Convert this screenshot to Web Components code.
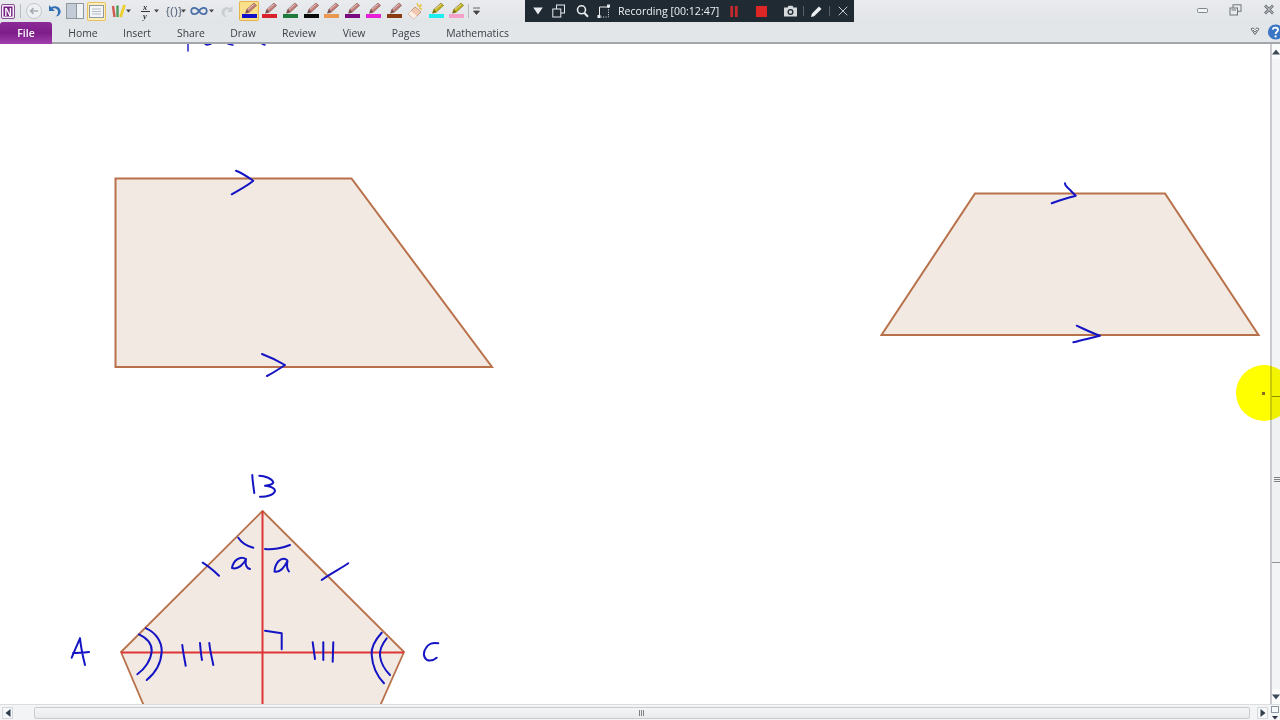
<!DOCTYPE html>
<html lang="en">
<head>
<meta charset="utf-8">
<title>Notebook recording</title>
<style>
html,body{margin:0;padding:0;width:1280px;height:720px;overflow:hidden;background:#fff;font-family:"Open Sans","Liberation Sans",sans-serif}
</style>
</head>
<body>
<app-window>
  <ribbon-bar slot="ribbon"></ribbon-bar>
  <note-canvas slot="canvas"></note-canvas>
  <v-scroll slot="vscroll"></v-scroll>
  <h-scroll slot="hscroll"></h-scroll>
  <rec-bar slot="overlay"></rec-bar>
  <cursor-spot slot="overlay"></cursor-spot>
</app-window>
<script>
function def(name, css, html){
  customElements.define(name, class extends HTMLElement{
    connectedCallback(){
      if(this.shadowRoot) return;
      const r=this.attachShadow({mode:'open'});
      const h=typeof html==='function'?html(this):html;
      r.innerHTML='<style>'+css+'</style>'+h;
    }
  });
}

def('app-window',`
:host{display:grid;grid-template-rows:44px 660px 16px;width:1280px;height:720px;position:relative;overflow:hidden;background:#fff}
.main{display:flex;min-height:0}
.main ::slotted(note-canvas){flex:1}
`,`<slot name="ribbon"></slot>
<div class="main"><slot name="canvas"></slot><slot name="vscroll"></slot></div>
<slot name="hscroll"></slot>
<slot name="overlay"></slot>`);

def('pen-tool',`
:host{display:block;width:20.8px;height:20px;flex:none}
svg{display:block;width:21px;height:20px}
`,el=>{
  const c=el.getAttribute('color'), hl=el.hasAttribute('highlighter');
  const body=hl?'#c4b41e':'#c67f7a', tip=hl?'#766d12':'#74504c';
  return `<svg viewBox="0 0 21 20">
  <path d="M6.6 12.2 L7.8 8.4 L15 2 L17.6 4.4 L10.4 11 Z" fill="${body}" stroke="${tip}" stroke-width=".6"/>
  <path d="M6.6 12.2 L7.8 8.4 L10.4 11 Z" fill="${tip}"/>
  <path d="M9 8.2 L15.4 3" stroke="#f1e6e2" stroke-width=".9" opacity=".8"/>
  <rect x="3" y="13" width="15" height="4" fill="${c}"/></svg>`;
});

def('caret-mark',`
:host{display:block;width:7px;height:20px;flex:none}
svg{display:block}
`,`<svg width="7" height="20" viewBox="0 0 7 20"><path d="M1 8.5 H6 L3.5 11.5 Z" fill="#444"/></svg>`);

def('qat-bar',`
:host{display:flex;align-items:center;height:22px;width:500px;padding-left:1px;box-sizing:border-box;position:relative}
.i{display:block;flex:none}
.sep{width:1px;height:14px;background:#b8bcc0;flex:none}
.hl{background:#fbeeb8;box-shadow:inset 0 0 0 1px #e9c05f;border-radius:2px;height:19px;display:flex;align-items:center;justify-content:center;flex:none}
.frac{display:flex;flex-direction:column;align-items:center;font:italic 700 8.5px/8px "Liberation Serif",serif;color:#333;width:10px;margin-left:8px;flex:none}
.frac i{display:block;width:9px;height:1px;background:#333}
.brace{font:11px/20px "Liberation Sans",sans-serif;color:#4a5a72;flex:none;width:20px;letter-spacing:.4px}
.pens{display:flex;align-items:center}
.pen0{width:20px;background:#fbe08c;box-shadow:inset 0 0 0 1px #e6b44c;border-radius:2px;height:20px}
`,`
<svg class="i" width="14" height="15" viewBox="0 0 14 15"><rect x=".5" y=".5" width="13" height="14" rx="1.5" fill="#f4eef6" stroke="#8a4a98"/><rect x="2.5" y="2.5" width="9" height="10" fill="#762283"/><text x="7" y="11.5" text-anchor="middle" font-family="Liberation Sans" font-weight="700" font-size="10" fill="#fff">N</text></svg>
<div class="sep" style="margin-left:5px"></div>
<svg class="i" style="margin-left:4px" width="18" height="18" viewBox="0 0 18 18"><circle cx="9" cy="9" r="7.5" fill="#eef0f2" stroke="#c4c8cc"/><path d="M13 9 H6 M8.5 6.2 L5.6 9 L8.5 11.8" fill="none" stroke="#a7adb4" stroke-width="1.6"/></svg>
<svg class="i" style="margin-left:2px" width="17" height="16" viewBox="0 0 17 16"><path d="M4 2 V8 H10 L7.6 5.8 C10 4.6 13 6 13 9 C13 11 12 12.5 10.5 13.5 C14 13.5 15.6 11 15.6 8.6 C15.6 4 10.5 1.6 6 4.2 Z" fill="#2f6fb5"/></svg>
<svg class="i" style="margin-left:4px" width="18" height="16" viewBox="0 0 18 16"><rect x=".5" y=".5" width="17" height="15" fill="#f0f3f6" stroke="#8f97a1"/><rect x="1" y="1" width="9" height="14" fill="#c3ccd6"/><path d="M10.5 1 V15" stroke="#8f97a1"/></svg>
<div class="hl" style="width:19px;margin-left:3px"><svg width="15" height="13" viewBox="0 0 15 13"><rect x=".5" y=".5" width="14" height="12" fill="#f3f5f7" stroke="#8f97a1"/><path d="M3 4 H12 M3 6.5 H12 M3 9 H12" stroke="#b5bcc4"/></svg></div>
<svg class="i" style="margin-left:4px" width="17" height="17" viewBox="0 0 17 17"><path d="M3 3 L4.5 14" stroke="#cf5a52" stroke-width="2.4"/><path d="M7.5 2.5 L7.5 14" stroke="#4f9a58" stroke-width="2.4"/><path d="M14.5 2 L10.5 14" stroke="#eccf2d" stroke-width="2.8"/></svg>
<caret-mark style="margin-left:-2px"></caret-mark>
<div class="frac"><span>x</span><i></i><span>y</span></div>
<caret-mark style="margin-left:3px"></caret-mark>
<div class="brace" style="margin-left:6px">{()}</div>
<caret-mark style="margin-left:-6px"></caret-mark>
<svg class="i" style="margin-left:3px" width="18" height="12" viewBox="0 0 18 12"><path d="M9 6 C6.5 2 1.5 1.5 1.2 6 C1.5 10.5 6.5 10 9 6 C11.5 2 16.5 1.5 16.8 6 C16.5 10.5 11.5 10 9 6 Z" fill="none" stroke="#4a6fa8" stroke-width="1.7"/></svg>
<caret-mark style="margin-left:0"></caret-mark>
<svg class="i" style="margin-left:5px" width="14" height="15" viewBox="0 0 14 15"><path d="M12.5 2 V8 H7 L9 6 C7 5 4.5 6 4.5 8.8 C4.5 10.6 5.4 12 6.6 13 C3.8 13 1.6 11 1.6 8.4 C1.6 4.2 6 2 10 4.2 Z" fill="#c9cdd1"/></svg>
<div class="pens" style="margin-left:5px">
  <pen-tool class="pen0" color="#1010c8"></pen-tool>
  <pen-tool color="#d8222c"></pen-tool>
  <pen-tool color="#1e7a3c"></pen-tool>
  <pen-tool color="#0a0a0a"></pen-tool>
  <pen-tool color="#ea9a50"></pen-tool>
  <pen-tool color="#7a0a80"></pen-tool>
  <pen-tool color="#e81ed8"></pen-tool>
  <pen-tool color="#8a3a10"></pen-tool>
  <svg class="i" style="margin-left:-1px;margin-right:1px" width="21" height="20" viewBox="0 0 21 20"><path d="M4 13 L11 6 L17 11 L10 18 Z" fill="#f2c9b0" stroke="#c79880"/><path d="M4 13 L7 10 L13 15 L10 18 Z" fill="#fbeee4"/><path d="M13 2 L14 5 L17 4 L15.5 7 L18 8.5" fill="none" stroke="#e9c23c" stroke-width="1.3"/></svg>
  <pen-tool highlighter color="#1ceef0"></pen-tool>
  <pen-tool highlighter color="#f5a0c8"></pen-tool>
</div>
<div class="sep" style="margin-left:1px"></div>
<svg class="i" style="margin-left:3px" width="9" height="12" viewBox="0 0 9 12"><path d="M1 3 H8 M1.5 6 H7.5 L4.5 9.5 Z" fill="#444" stroke="#444" stroke-width=".8"/></svg>
`);

def('ribbon-tab',`
:host{display:flex;align-items:center;justify-content:center;height:22px;font:10.4px/22px "Open Sans","Liberation Sans",sans-serif;color:#3c4048;position:absolute;top:0;transform:translateX(-50%);white-space:nowrap}
`,`<slot></slot>`);

def('ribbon-bar',`
:host{display:block;height:44px;box-sizing:border-box;position:relative;background:linear-gradient(#e9ebee,#e2e5e8 50%,#e4e7ea);border-bottom:2px solid #a3a6aa}
.tabs{position:relative;height:22px;display:flex}
.file{width:52px;height:22px;box-sizing:border-box;background:linear-gradient(#8c2a98,#7d1e89 50%,#a13fae);border-radius:3px 3px 0 0;color:#fff;font:600 10.4px/22px "Open Sans","Liberation Sans",sans-serif;text-align:center;flex:none}
.win{position:absolute;right:0;top:0;height:22px;width:90px}
.help{position:absolute;right:0;top:22px;width:30px;height:20px}
svg{display:block;position:absolute}
`,`
<qat-bar></qat-bar>
<div class="tabs">
  <div class="file">File</div>
  <ribbon-tab style="left:83px">Home</ribbon-tab>
  <ribbon-tab style="left:137px">Insert</ribbon-tab>
  <ribbon-tab style="left:191px">Share</ribbon-tab>
  <ribbon-tab style="left:243px">Draw</ribbon-tab>
  <ribbon-tab style="left:299px">Review</ribbon-tab>
  <ribbon-tab style="left:354px">View</ribbon-tab>
  <ribbon-tab style="left:406px">Pages</ribbon-tab>
  <ribbon-tab style="left:477.5px">Mathematics</ribbon-tab>
</div>
<div class="win">
  <svg style="left:7px;top:7px" width="12" height="8" viewBox="0 0 12 8"><rect x=".5" y="1.5" width="10" height="4" rx="1" fill="#f2f3f4" stroke="#7f858c"/></svg>
  <svg style="left:39px;top:4px" width="13" height="12" viewBox="0 0 13 12"><rect x="4" y=".8" width="8" height="6.5" fill="#e8eaec" stroke="#6f757c"/><rect x="1" y="4" width="7.5" height="7" fill="#e8eaec" stroke="#6f757c"/><path d="M2.5 6 H7" stroke="#6f757c"/></svg>
  <svg style="left:73px;top:4px" width="12" height="11" viewBox="0 0 12 11"><path d="M2 1.5 L10 9.5 M10 1.5 L2 9.5" stroke="#5b6168" stroke-width="2.6"/><path d="M2 1.5 L10 9.5 M10 1.5 L2 9.5" stroke="#eceeef" stroke-width="1"/></svg>
</div>
<div class="help">
  <svg style="left:0;top:5px" width="10" height="9" viewBox="0 0 10 9"><path d="M1 2 C2.5 .5 3.8 1 5 2.6 C6.2 1 7.5 .5 9 2 L5 7.5 Z" fill="#f4f5f6" stroke="#63686f"/><path d="M3 3 L5 5.2 L7 3" fill="none" stroke="#63686f"/></svg>
  <svg style="left:17px;top:2px" width="17" height="16" viewBox="0 0 17 16"><circle cx="8.5" cy="8" r="7.6" fill="#3a76c4"/><path d="M5.8 5.6 C6 3 11 3 11 6 C11 7.8 8.6 7.8 8.6 10" fill="none" stroke="#fff" stroke-width="1.8"/><circle cx="8.6" cy="12.4" r="1.1" fill="#fff"/></svg>
</div>
`);

def('rec-bar',`
:host{position:absolute;left:525px;top:0;width:329px;height:22px;display:flex;align-items:center;background:#1f2a33;color:#eef1f3;font:10.6px/22px "Open Sans","Liberation Sans",sans-serif;box-sizing:border-box}
svg{display:block;flex:none}
.t{flex:none;white-space:nowrap;margin-left:7px;width:100px}
.v{width:1px;height:10px;background:#566069;flex:none}
`,`
<svg style="margin-left:8px" width="10" height="8" viewBox="0 0 10 8"><path d="M.2 .5 H9.8 L5 7.5 Z" fill="#e8ecef"/></svg>
<svg style="margin-left:9px" width="13" height="14" viewBox="0 0 13 14"><rect x="4.5" y="1" width="8" height="8" fill="none" stroke="#e8ecef"/><rect x=".8" y="5" width="8" height="8" fill="#1f2a33" stroke="#e8ecef"/></svg>
<svg style="margin-left:11px" width="13" height="14" viewBox="0 0 13 14"><circle cx="5.5" cy="5.8" r="4" fill="none" stroke="#e8ecef" stroke-width="1.6"/><path d="M8.4 9 L12 12.8" stroke="#e8ecef" stroke-width="2"/></svg>
<svg style="margin-left:8px" width="14" height="14" viewBox="0 0 14 14"><path d="M2.5 13 V3 H11.5" fill="none" stroke="#e8ecef" stroke-width="1"/><path d="M11.5 3 V13 H2.5" fill="none" stroke="#e8ecef" stroke-dasharray="1 1.4"/><rect x=".5" y="11" width="3" height="3" fill="#e8ecef"/><rect x="10" y=".5" width="3" height="3" fill="#e8ecef"/></svg>
<div class="t">Recording [00:12:47]</div>
<svg style="margin-left:12px" width="8" height="11" viewBox="0 0 8 11"><rect x=".3" width="2.8" height="11" fill="#c42a2c"/><rect x="4.9" width="2.8" height="11" fill="#c42a2c"/></svg>
<svg style="margin-left:18px" width="11" height="11" viewBox="0 0 11 11"><rect width="11" height="11" fill="#dd2727"/></svg>
<svg style="margin-left:16px" width="15" height="12" viewBox="0 0 15 12"><path d="M1 2.5 H4.5 L5.5 .8 H9.5 L10.5 2.5 H14 V11.5 H1 Z" fill="#d5d9dc"/><circle cx="7.5" cy="7" r="3" fill="#1f2a33"/><circle cx="7.5" cy="7" r="1.7" fill="#d5d9dc"/></svg>
<div class="v" style="margin-left:5px"></div>
<svg style="margin-left:6px" width="13" height="13" viewBox="0 0 13 13"><path d="M1 12 L1.8 8.8 L9 1.5 L11.5 4 L4.2 11.2 Z" fill="#eef1f3"/></svg>
<div class="v" style="margin-left:6px"></div>
<svg style="margin-left:8px" width="10" height="10" viewBox="0 0 10 10"><path d="M.7 .7 L9.3 9.3 M9.3 .7 L.7 9.3" stroke="#c4cacf" stroke-width="1"/></svg>
`);

def('note-canvas',`
:host{display:block;height:660px;overflow:hidden;background:#fff}
svg{display:block}
.shape{fill:#f2e9e2;stroke:#b8714a;stroke-width:2;stroke-linejoin:miter}
.red{stroke:#dd3535;stroke-width:2;fill:none}
.ink{fill:none;stroke:#1414c4;stroke-width:2;stroke-linecap:round;stroke-linejoin:round}
`,`<svg width="1270" height="660" viewBox="0 44 1270 660">
<polygon class="shape" points="115.5,178.5 351.5,178.5 492,367 115.5,367"/>
<polygon class="shape" points="975,193.5 1165,193.5 1258.5,335 881.5,335"/>
<polygon class="shape" points="262.5,511 404,652 380,706 144,706 121,652" style="stroke-width:1.8"/>
<path class="red" d="M262.5 511 V704 M121 652.5 H404"/>
<g class="ink">
  <path d="M236 170.7 C242 173 248 177 253.3 180.7 C247 186 239 190 231.7 194.3"/>
  <path d="M262 354 C270 357 278 361 285 365 C279 369 273 373 267 376"/>
  <path d="M1065 183.3 C1065 187 1070 189 1071 191 L1075.7 195.7 C1068 198 1060 200 1051.7 203.3"/>
  <path d="M1076.7 325.7 C1084 329 1092 333 1100 335.7 C1091 338 1082 340 1073.3 342.3"/>
  <path d="M188 44 V51 M205 44 L207 45 L211 44 M228 44 L233 45 M262 44 L265 45" stroke-width="1.4"/>
  <path d="M252.3 475 C252.5 481 253.5 487 254.3 493"/>
  <path d="M259.3 475.7 C264 476 272 478 273.3 482.5 C272 485 268 485.5 265 485.7 C270 486 275 488 275 491 C274 495 266 497 260 496.7"/>
  <path d="M238.3 537.7 C241 542 247 546 253.3 547.7"/>
  <path d="M265 549 C272 550 283 548 290 545"/>
  <path d="M246 559 C240 555 233 561 232 568 C238 570 244 564 246 559 C245 564 246 568 250 569"/>
  <path d="M287 560 C281 556 275 563 274.5 571.5 C280 573 285 566 287.5 561 C286.5 565 287 570 289 571.5"/>
  <path d="M202.7 562.7 C208 566 214 571 219 575.7"/>
  <path d="M321.7 580 C330 574 340 569 348.3 563.3"/>
  <path d="M139 634.3 C147 638 152 643 151.7 651 C151 660 145 669 137.3 674.3"/>
  <path d="M146 628.3 C155 632 162 641 161.7 651.7 C161 664 154 674 146.7 680"/>
  <path d="M182.3 645 C183 652 184.5 659 185.7 665.7"/>
  <path d="M200 643 C200.5 649 201 655 202 660"/>
  <path d="M209.3 643 C210 651 212 658 213.3 665"/>
  <path d="M265 630.7 L281.7 633.3 L281.7 649.3"/>
  <path d="M312.7 642.3 L315 659"/>
  <path d="M323.3 642.3 V660"/>
  <path d="M333.3 642.3 L332.7 661.7"/>
  <path d="M381.7 632.7 C375 640 371 648 371.7 655 C372.5 667 378 677 384 683.3"/>
  <path d="M386.7 638.3 C382 644 379.5 650 380 656 C381 664 385 670 390 675"/>
  <path d="M80 638.3 C77 645 74 652 71.7 657.7 M80 638.3 C81 648 83 657 85 665 M73 653 C78 653 84 652.5 89 652"/>
  <path d="M438.3 643.3 C433 642 428 644 426 648 C423 652 423 657 427 660 C430 661 434 660 436.7 657.7"/>
</g>
</svg>`);

def('v-scroll',`
:host{display:flex;flex-direction:column;width:10px;height:660px;box-sizing:border-box;background:#f3f4f5;border-left:2px solid #c9cbce;position:relative}
.btn{height:15px;flex:none;display:flex;align-items:center;justify-content:flex-end;background:#fafbfb}
.track{flex:1;display:flex;flex-direction:column;min-height:0}
.sp1{height:337px;flex:none}
.thumb{height:167px;flex:none;box-sizing:border-box;border-top:1px solid #8d9095;border-bottom:1px solid #8d9095;background:#f0f1f2;display:flex;align-items:center;justify-content:flex-end}
.grip{width:6px;height:6px;background:repeating-linear-gradient(#7d8186 0 1px,transparent 1px 2px)}
`,`
<div class="btn"><svg width="8" height="6" viewBox="0 0 8 6"><path d="M0 5.5 L4 .5 L8 5.5 Z" fill="#3c4a5a"/></svg></div>
<div class="track"><div class="sp1"></div><div class="thumb"><div class="grip"></div></div></div>
<div class="btn"><svg width="8" height="6" viewBox="0 0 8 6"><path d="M0 .5 H8 L4 5.5 Z" fill="#3c4a5a"/></svg></div>
`);

def('h-scroll',`
:host{display:flex;align-items:center;height:16px;box-sizing:border-box;background:#f3f4f5;border-top:1px solid #dcdde0}
.btn{width:11px;height:12px;flex:none;display:flex;align-items:center;justify-content:center;background:#f5f7f8;box-shadow:inset 0 0 0 1px #d5d7da}
.thumb{height:12px;flex:none;width:1216px;box-sizing:border-box;border:1px solid #c9cbce;border-radius:2px;background:linear-gradient(#f4f5f6,#e9eaec);display:flex;align-items:center;justify-content:center}
.grip{width:6px;height:6px;background:repeating-linear-gradient(90deg,#7d8186 0 1px,transparent 1px 2px)}
.corner{margin-left:auto;flex:none}
`,`
<div class="btn" style="margin-left:2px"><svg width="6" height="8" viewBox="0 0 6 8"><path d="M5.5 0 V8 L.5 4 Z" fill="#2f3d4d"/></svg></div>
<div style="width:21px;flex:none"></div>
<div class="thumb"><div class="grip"></div></div>
<div style="width:7px;flex:none"></div>
<div class="btn"><svg width="6" height="8" viewBox="0 0 6 8"><path d="M.5 0 V8 L5.5 4 Z" fill="#2f3d4d"/></svg></div>
<svg class="corner" width="10" height="14" viewBox="0 0 10 14"><rect x="1.5" y=".5" width="7" height="6" fill="#f7f8f9" stroke="#8d97a3"/><path d="M2 10 H8 L5 13.5 Z" fill="#334"/></svg>
`);

def('cursor-spot',`
:host{position:absolute;left:1236px;top:365px;width:56px;height:56px;border-radius:50%;background:#ffff00;mix-blend-mode:multiply;display:flex;align-items:center;justify-content:center}
.dot{width:3px;height:3px;background:#8a6a20;margin-right:2px}
`,`<div class="dot"></div>`);
</script>
</body>
</html>
